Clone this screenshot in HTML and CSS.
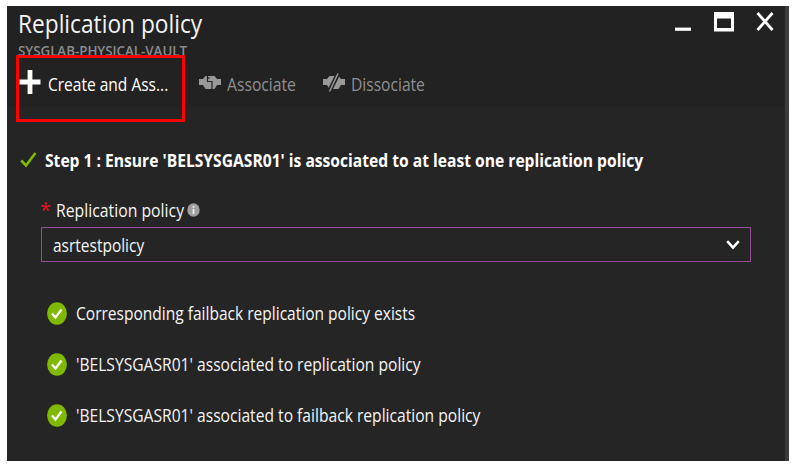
FILE: index.html
```
<!DOCTYPE html>
<html lang="en">
<head>
<meta charset="utf-8">
<title>Replication policy</title>
<link rel="stylesheet" href="styles.css">
</head>
<body>
<main class="blade">
  <header class="head">
    <div class="titlebar">
      <div class="titles">
        <h1 class="title">Replication policy</h1>
        <p class="subtitle">SYSGLAB-PHYSICAL-VAULT</p>
      </div>
      <div class="window-buttons">
        <svg width="18" height="20" viewBox="0 0 18 20"><path d="M1 17.200h16" stroke="#fff" stroke-width="3.200"/></svg>
        <svg width="20" height="20" viewBox="0 0 20 20"><path fill="#fff" fill-rule="evenodd" d="M0 0h20v19.500H0zM3 6.500v9.500h14V6.500z"/></svg>
        <svg width="18" height="20" viewBox="0 0 18 20"><path d="M1.500 1l15 17M16.500 1l-15 17" stroke="#fff" stroke-width="2.700"/></svg>
      </div>
    </div>
    <nav class="commands">
      <div class="command create">
        <svg width="22" height="24" viewBox="0 0 22 24"><path d="M11 0v24M0.500 12h21" stroke="#fff" stroke-width="4.800"/></svg>
        <span class="fit w-create">Create and Ass...</span>
      </div>
      <div class="command off assoc">
        <svg width="22" height="24" viewBox="0 0 22 24"><path fill="#999" d="M0 9h4l2.500-3h9L18 9h4v6h-4l-2.500 4h-9L4 15H0z"/><path fill="none" stroke="#222" stroke-width="1.200" d="M8.500 5.500v6h4.500v7.500M8.500 8h2.500"/></svg>
        <span class="fit w-assoc">Associate</span>
      </div>
      <div class="command off dissoc">
        <svg width="22" height="24" viewBox="0 0 22 24"><path fill="#999" d="M0 9h4l2.500-3h9L18 9h4v6h-4l-2.500 4h-9L4 15H0z"/><path d="M6 22L15.500 3" stroke="#222" stroke-width="4.500"/><path d="M6.500 21.500L15 3.500" stroke="#999" stroke-width="1.500"/></svg>
        <span class="fit w-dissoc">Dissociate</span>
      </div>
      <div class="highlight"></div>
    </nav>
  </header>
  <section class="content">
    <h2 class="step">
      <svg width="17" height="16" viewBox="0 0 17 16"><path d="M1.200 8.500l4.800 5L15.500 1" fill="none" stroke="#7fba00" stroke-width="2.700"/></svg>
      <span class="fit w-step">Step 1 : Ensure 'BELSYSGASR01' is associated to at least one replication policy</span>
    </h2>
    <div class="label">
      <span class="star">*</span>
      <span class="fit w-label">Replication policy</span>
      <svg width="13" height="14" viewBox="0 0 13 14"><ellipse cx="6.500" cy="7" rx="6.200" ry="6.800" fill="#a0a0a0"/><path d="M5.600 3h1.800v1.800H5.600zM5.600 5.900h1.800v5H5.600z" fill="#eee"/></svg>
    </div>
    <div class="select">
      <span class="fit w-value">asrtestpolicy</span>
      <svg width="14" height="10" viewBox="0 0 14 10"><path d="M1.200 1.200L7 7.700l5.800-6.500" fill="none" stroke="#fff" stroke-width="2.500"/></svg>
    </div>
    <ul class="checks">
      <li><svg width="20" height="23" viewBox="0 0 20 23"><ellipse cx="10" cy="11.500" rx="9.900" ry="11.200" fill="#7fba00"/><path d="M5 11.500l3.500 4 6-8" fill="none" stroke="#fff" stroke-width="2.300"/></svg><span class="fit w-c1">Corresponding failback replication policy exists</span></li>
      <li><svg width="20" height="23" viewBox="0 0 20 23"><ellipse cx="10" cy="11.500" rx="9.900" ry="11.200" fill="#7fba00"/><path d="M5 11.500l3.500 4 6-8" fill="none" stroke="#fff" stroke-width="2.300"/></svg><span class="fit w-c2">'BELSYSGASR01' associated to replication policy</span></li>
      <li><svg width="20" height="23" viewBox="0 0 20 23"><ellipse cx="10" cy="11.500" rx="9.900" ry="11.200" fill="#7fba00"/><path d="M5 11.500l3.500 4 6-8" fill="none" stroke="#fff" stroke-width="2.300"/></svg><span class="fit w-c2">'BELSYSGASR01' associated to failback replication policy</span></li>
    </ul>
  </section>
</main>
</body>
</html>
```
FILE: styles.css
```
* { box-sizing: border-box; }
body { margin: 0; background: #fff; font-family: "Open Sans", "Noto Sans", sans-serif; font-size: 18px; line-height: 24px; color: #f4f4f4; }
h1, h2, p, ul { margin: 0; padding: 0; }
ul { list-style: none; }
svg { display: block; flex: none; }

.blade { width: 782px; height: 455px; margin: 6px 0 0 7px; border-right: 4px solid #3c3c3c; background: #252525; overflow: hidden; }
.head { height: 101px; background: #222; }
.titlebar { display: flex; justify-content: space-between; height: 62px; padding: 0 11px 0 11px; }
.title { width: 211px; height: 36px; font-size: 26px; line-height: 34px; font-weight: 400; transform: scaleX(.873); transform-origin: 0 0; white-space: nowrap; }
.subtitle { width: 180px; height: 18px; font-size: 13.500px; line-height: 18px; font-weight: 600; color: #8c8c8c; transform: scaleX(.985); transform-origin: 0 0; white-space: nowrap; }
.window-buttons { display: flex; gap: 22px; padding-top: 6px; }

/* Condensed text: each line is set wide and scaled to its column. */
.fit { display: block; flex: none; white-space: nowrap; transform-origin: 0 50%; transform: scaleX(.866); }
.w-create { width: 121px; transform: scaleX(.862); }
.w-assoc { width: 71px; transform: scaleX(.872); }
.w-dissoc { width: 74px; }
.w-step { width: 600px; transform: scaleX(.868); }
.w-label { width: 131px; transform: scaleX(.877); }
.w-value { width: 92px; transform: scaleX(.86); }
.w-c1 { width: 339px; transform: scaleX(.863); }
.w-c2 { width: 345px; transform: scaleX(.868); }

.commands { position: relative; display: flex; padding: 2px 0 0 12px; height: 26px; }
.command { display: flex; gap: 7px; height: 24px; color: #fff; }
.command .fit { padding-top: 2px; }
.off { gap: 6px; color: #8f8f8f; }
.assoc { margin-left: 30px; }
.dissoc { margin-left: 25px; }
.highlight { position: absolute; left: 9px; top: -13px; width: 169px; height: 67px; border: 3px solid #f00; }

.content { padding: 41px 34px 0 13px; }
.step { display: flex; align-items: center; gap: 8px; height: 24px; font-size: 18px; font-weight: 700; color: #fff; }
.label { display: flex; align-items: center; height: 24px; margin: 26px 0 5px 20px; }
.star { width: 16px; color: #e81123; font-size: 20px; line-height: 24px; }
.select { display: flex; align-items: center; justify-content: space-between; height: 35px; margin-left: 21px; padding: 0 10px 0 11px; border: 1px solid #944a94; }
.checks { margin: 39px 0 0 27px; }
.checks li { display: flex; align-items: center; gap: 9px; height: 24px; margin-bottom: 27px; }
```
